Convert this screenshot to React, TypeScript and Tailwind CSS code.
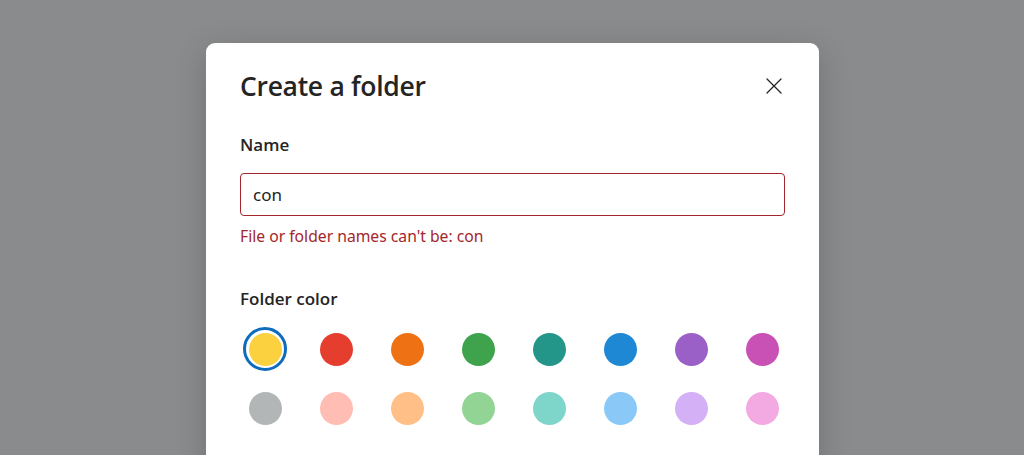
const colors = [
  ['#fcd13f', '#e53e2f', '#ee7214', '#3fa34e', '#239689', '#1f88d4', '#9a60c8', '#c951b6'],
  ['#b3b6b7', '#ffbdb4', '#ffbf86', '#91d494', '#7ed5c9', '#8ac9f7', '#d4b1f6', '#f3a9e1'],
]

function Swatch({ color, selected }: { color: string; selected?: boolean }) {
  return (
    <button
      className={
        'w-[44px] h-[44px] rounded-full flex items-center justify-center shrink-0 ' +
        (selected ? 'border-[3px] border-[#0f6cbd]' : 'border-[3px] border-transparent')
      }
    >
      <span className="block w-[33px] h-[33px] rounded-full" style={{ backgroundColor: color }} />
    </button>
  )
}

export default function App() {
  return (
    <div
      className="w-[1024px] h-[455px] overflow-hidden bg-[#8a8b8c] pt-[43px] pl-[206px]"
      style={{ fontFamily: '"Noto Sans", "Open Sans", sans-serif' }}
    >
      <div className="w-[613px] h-[440px] bg-white rounded-[9px] shadow-[0_8px_32px_rgba(0,0,0,0.18)] px-[34px] pt-[25px]">
        <div className="flex items-center justify-between h-[36px]">
          <h1 className="font-['Open_Sans',sans-serif] text-[26.5px] leading-[36px] text-[#242424] font-semibold tracking-[-0.3px]">
            Create a folder
          </h1>
          <button className="w-6 h-6 flex items-center justify-center -mr-[1px] text-[#242424]">
            <svg width="16" height="16" viewBox="0 0 16 16" fill="none" stroke="currentColor" strokeWidth="1.3" strokeLinecap="round">
              <path d="M1 1 L15 15 M15 1 L1 15" />
            </svg>
          </button>
        </div>

        <label className="block mt-[29px] font-['Open_Sans',sans-serif] text-[17px] leading-[24px] font-semibold text-[#242424]">
          Name
        </label>
        <div className="mt-[16px] h-[43px] rounded-[4px] border border-[#a4262c] flex items-center px-[12px]">
          <span className="text-[17px] text-[#242424]">con</span>
        </div>
        <p className="mt-[9px] text-[15.7px] leading-[22px] text-[#a4262c]">File or folder names can't be: con</p>

        <label className="block mt-[40px] font-['Open_Sans',sans-serif] text-[17px] leading-[24px] font-semibold text-[#242424]">
          Folder color
        </label>
        <div className="mt-[16px] ml-[3px] flex flex-col gap-[15px]">
          {colors.map((row, r) => (
            <div key={r} className="flex gap-[27px]">
              {row.map((c, i) => (
                <Swatch key={c} color={c} selected={r === 0 && i === 0} />
              ))}
            </div>
          ))}
        </div>
      </div>
    </div>
  )
}
